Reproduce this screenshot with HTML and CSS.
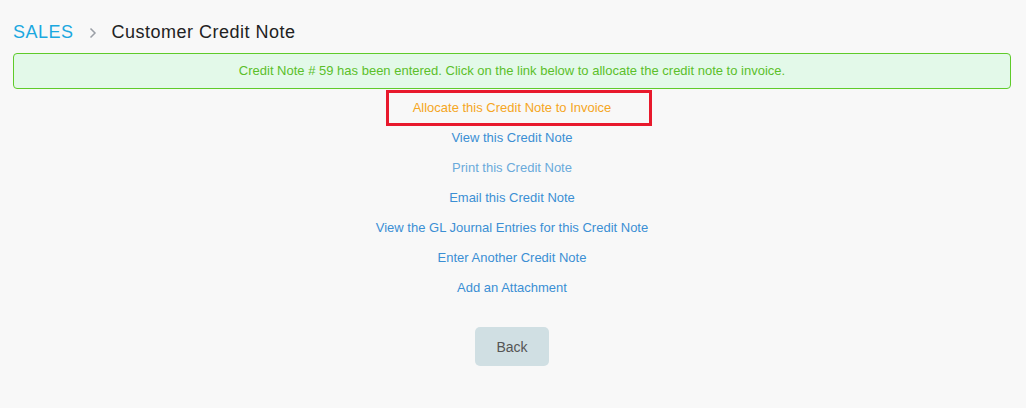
FILE: index.html
```html
<!DOCTYPE html>
<html>
<head>
  <title>Customer Credit Note</title>
  <link rel="stylesheet" href="styles.css">
</head>
<body>
  <div class="page">
    <div class="breadcrumb">
      <a href="#" class="crumb-root">SALES</a>
      <svg class="crumb-sep" width="8" height="12" viewBox="0 0 8 12">
        <path d="M1.5 1.5 L6 6 L1.5 10.5" fill="none" stroke="#9a9fa6" stroke-width="1.5"/>
      </svg>
      <span class="crumb-title">Customer Credit Note</span>
    </div>

    <div class="alert-success">
      Credit Note # 59 has been entered. Click on the link below to allocate the credit note to invoice.
    </div>

    <div class="links">
      <div class="link-row marked">
        <a href="#" class="link-warning">Allocate this Credit Note to Invoice</a>
        <span class="mark-box"></span>
      </div>
      <div class="link-row"><a href="#">View this Credit Note</a></div>
      <div class="link-row"><a href="#" class="link-light">Print this Credit Note</a></div>
      <div class="link-row"><a href="#">Email this Credit Note</a></div>
      <div class="link-row"><a href="#">View the GL Journal Entries for this Credit Note</a></div>
      <div class="link-row"><a href="#">Enter Another Credit Note</a></div>
      <div class="link-row"><a href="#">Add an Attachment</a></div>
    </div>

    <div class="actions">
      <button class="btn-back">Back</button>
    </div>
  </div>
</body>
</html>
```

FILE: styles.css
```css
body {
  font-family: 'Liberation Sans', Arial, sans-serif;
  background: #f8f8f8;
  margin: 0;
  padding: 0;
  color: #333;
}
.page {
  margin: 0 15px 0 13px;
}
.breadcrumb {
  height: 53px;
  display: flex;
  align-items: center;
  padding-top: 12px;
  box-sizing: border-box;
  font-size: 18px;
  letter-spacing: 0.5px;
}
.crumb-root {
  color: #1ba8e0;
  text-decoration: none;
}
.crumb-sep {
  margin: 0 15px 0 15px;
}
.crumb-title {
  color: #222;
}
.alert-success {
  border: 1px solid #5fcb2a;
  border-radius: 4px;
  background: #e3f9e9;
  color: #5bbf2a;
  font-size: 13px;
  text-align: center;
  height: 36px;
  line-height: 34px;
  box-sizing: border-box;
}
.links {
  margin-top: 4px;
  display: flex;
  flex-direction: column;
  align-items: center;
}
.link-row {
  height: 30px;
  line-height: 30px;
  font-size: 13px;
  text-align: center;
}
.link-row a {
  color: #3b8fd4;
  text-decoration: none;
}
.link-row a.link-light {
  color: #6aaadb;
}
.link-row a.link-warning {
  color: #f5a623;
}
.marked {
  position: relative;
}
.mark-box {
  position: absolute;
  left: -27px;
  right: -41px;
  top: -3px;
  bottom: -3px;
  border: 3px solid #e8192c;
}
.actions {
  display: flex;
  justify-content: center;
  margin-top: 24px;
}
.btn-back {
  width: 74px;
  height: 39px;
  border: none;
  border-radius: 5px;
  background: #d0dfe3;
  color: #555;
  font-family: 'Liberation Sans', Arial, sans-serif;
  font-size: 14px;
  cursor: pointer;
}
```
